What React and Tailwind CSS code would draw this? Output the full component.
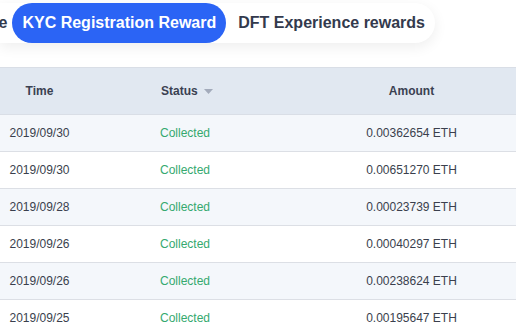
import React from 'react';

const ROWS = [
  { time: '2019/09/30', status: 'Collected', amount: '0.00362654 ETH' },
  { time: '2019/09/30', status: 'Collected', amount: '0.00651270 ETH' },
  { time: '2019/09/28', status: 'Collected', amount: '0.00023739 ETH' },
  { time: '2019/09/26', status: 'Collected', amount: '0.00040297 ETH' },
  { time: '2019/09/26', status: 'Collected', amount: '0.00238624 ETH' },
  { time: '2019/09/25', status: 'Collected', amount: '0.00195647 ETH' },
];

export default function App() {
  return (
    <div className="w-[516px] h-[336px] overflow-hidden bg-white font-['Liberation_Sans',Arial,sans-serif]">
      {/* ── Tabs ───────────────────────── */}
      <div className="h-[67px] pt-[3px]">
        <div className="w-[435px] h-[40px] flex justify-end items-center bg-white rounded-r-full shadow-[0_4px_14px_rgba(0,0,0,0.07)]">
          <span className="whitespace-nowrap text-[16px] font-bold text-[#333a4d] pr-[5px]">Invite</span>
          <button className="h-[40px] px-[10px] rounded-full bg-[#2b64f5] text-white text-[16px] font-bold whitespace-nowrap">
            KYC Registration Reward
          </button>
          <button className="h-[40px] pl-[12px] pr-[10px] text-[#333a4d] text-[16px] font-bold whitespace-nowrap">
            DFT Experience rewards
          </button>
        </div>
      </div>

      {/* ── Table ──────────────────────── */}
      <div className="border-t border-[#d9dee6]">
        <div className="h-[47px] flex items-center bg-[#e1e8f1] border-b border-[#d9dee6] text-[12px] font-bold text-[#3a4152]">
          <div className="w-[79px] text-center">Time</div>
          <div className="w-[81px]" />
          <div className="w-[147px] flex items-center">
            <span className="pl-[1px]">Status</span>
            <svg width="9" height="5" viewBox="0 0 9 5" className="ml-[6px] mt-[1px]">
              <path d="M0 0h9L4.5 5z" fill="#a3abbb" />
            </svg>
          </div>
          <div className="flex-1 text-center">Amount</div>
        </div>
        {ROWS.map((r, i) => (
          <div
            key={i}
            className={`h-[37px] flex items-center border-b border-[#dcdfe5] text-[12px] ${i % 2 === 0 ? 'bg-[#f4f7fb]' : 'bg-white'}`}
          >
            <div className="w-[79px] text-center text-[#3a3f4d]">{r.time}</div>
            <div className="w-[81px]" />
            <div className="w-[147px] text-[#35a96f]">{r.status}</div>
            <div className="flex-1 text-center text-[#3a3f4d]">{r.amount}</div>
          </div>
        ))}
      </div>
    </div>
  );
}
